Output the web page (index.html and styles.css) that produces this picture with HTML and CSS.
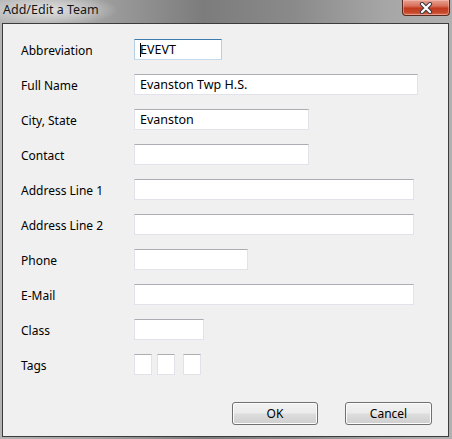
FILE: index.html
```html
<!DOCTYPE html>
<html>
<head>
<meta charset="utf-8">
<link rel="stylesheet" href="styles.css">
</head>
<body>
<div class="window">
  <div class="titlebar">
    <span class="title">Add/Edit a Team</span>
    <div class="close">
      <svg width="20" height="12" viewBox="0 0 20 12">
        <path d="M6 2 L14 10 M14 2 L6 10" stroke="#3a3a48" stroke-width="4.2" stroke-linecap="round"/>
        <path d="M6 2 L14 10 M14 2 L6 10" stroke="#ffffff" stroke-width="2.2" stroke-linecap="round"/>
      </svg>
    </div>
  </div>
  <div class="content">
    <div class="form">
      <label class="lbl">Abbreviation</label>
      <div class="field"><div class="input focus w-abbr"><span class="caret"></span>EVEVT</div></div>
      <label class="lbl">Full Name</label>
      <div class="field"><div class="input w-full">Evanston Twp H.S.</div></div>
      <label class="lbl">City, State</label>
      <div class="field"><div class="input w-city">Evanston</div></div>
      <label class="lbl">Contact</label>
      <div class="field"><div class="input w-city"></div></div>
      <label class="lbl">Address Line 1</label>
      <div class="field"><div class="input w-addr"></div></div>
      <label class="lbl">Address Line 2</label>
      <div class="field"><div class="input w-addr"></div></div>
      <label class="lbl">Phone</label>
      <div class="field"><div class="input w-phone"></div></div>
      <label class="lbl">E-Mail</label>
      <div class="field"><div class="input w-addr"></div></div>
      <label class="lbl">Class</label>
      <div class="field"><div class="input w-class"></div></div>
      <label class="lbl">Tags</label>
      <div class="field tags"><div class="input tag"></div><div class="input tag"></div><div class="input tag tag3"></div></div>
    </div>
    <div class="buttons">
      <button class="btn ok">OK</button>
      <button class="btn cancel">Cancel</button>
    </div>
  </div>
</div>
</body>
</html>
```
FILE: styles.css
```css
html, body {
  margin: 0;
  padding: 0;
  background: #a9a9a9;
}
.window {
  width: 452px;
  height: 439px;
  display: flex;
  flex-direction: column;
  background: linear-gradient(90deg, #b4b4b4 0%, #a2a2a2 20%, #7c7c7c 45%, #8a8a8a 65%, #a6a6a6 85%, #b0b0b0 100%);
  font-family: "Noto Sans", "Open Sans", sans-serif;
  overflow: hidden;
}
.titlebar {
  height: 23px;
  display: flex;
  align-items: flex-start;
  position: relative;
  background: radial-gradient(ellipse 70px 16px at 48px 10px, rgba(235,235,235,0.85) 0%, rgba(220,220,220,0.5) 60%, rgba(200,200,200,0) 100%);
}
.title {
  font-size: 12.5px;
  color: #151515;
  padding: 1px 0 0 3px;
  line-height: 18px;
}
.close {
  position: absolute;
  left: 402px;
  top: 0;
  width: 46px;
  height: 15px;
  border: 1px solid #5a2a22;
  border-top: none;
  border-radius: 0 0 4px 4px;
  background: linear-gradient(180deg, #e7a294 0%, #d9705a 40%, #c13a1e 55%, #c84a2c 85%, #dd7b5d 100%);
  box-shadow: inset 0 0 0 1px rgba(255,200,190,0.45);
  display: flex;
  align-items: center;
  justify-content: center;
}
.content {
  flex: 1;
  margin: 0 3px 2px 2px;
  border: 1px solid #3c3c3c;
  background: #f0f0f0;
  display: flex;
  flex-direction: column;
}
.form {
  display: grid;
  grid-template-columns: 113px auto;
  row-gap: 14px;
  padding: 15px 0 0 18px;
}
.lbl {
  font-size: 12px;
  color: #000;
  line-height: 21px;
  height: 21px;
  padding-top: 1px;
  box-sizing: border-box;
}
.field {
  display: flex;
  height: 21px;
}
.input {
  box-sizing: border-box;
  height: 21px;
  background: #fff;
  border: 1px solid #e2e3ea;
  border-top-color: #abadb3;
  font-size: 12.5px;
  line-height: 19px;
  padding-left: 5px;
  color: #000;
  white-space: nowrap;
  position: relative;
}
.input.focus {
  border-color: #c5daed;
  border-top-color: #3d7bad;
  border-left-color: #b5cfe7;
  border-right-color: #b5cfe7;
}
.caret {
  position: absolute;
  left: 5px;
  top: 3px;
  width: 1px;
  height: 14px;
  background: #000;
}
.w-abbr { width: 88px; }
.w-full { width: 284px; }
.w-city { width: 175px; }
.w-addr { width: 280px; }
.w-phone { width: 114px; }
.w-class { width: 70px; }
.tags { gap: 5px; }
.tag { width: 18px; }
.tag3 { margin-left: 3px; }
.buttons {
  margin-top: auto;
  display: flex;
  justify-content: flex-end;
  gap: 27px;
  padding: 0 16px 11px 0;
}
.btn {
  box-sizing: border-box;
  height: 23px;
  border: 1px solid #707070;
  border-radius: 3px;
  background: linear-gradient(180deg, #f2f2f2 0%, #ebebeb 48%, #dddddd 52%, #cfcfcf 100%);
  box-shadow: inset 0 0 0 1px #fcfcfc;
  font-family: "Noto Sans", "Open Sans", sans-serif;
  font-size: 12px;
  color: #000;
  padding: 0;
}
.ok { width: 86px; }
.cancel { width: 87px; }
```
